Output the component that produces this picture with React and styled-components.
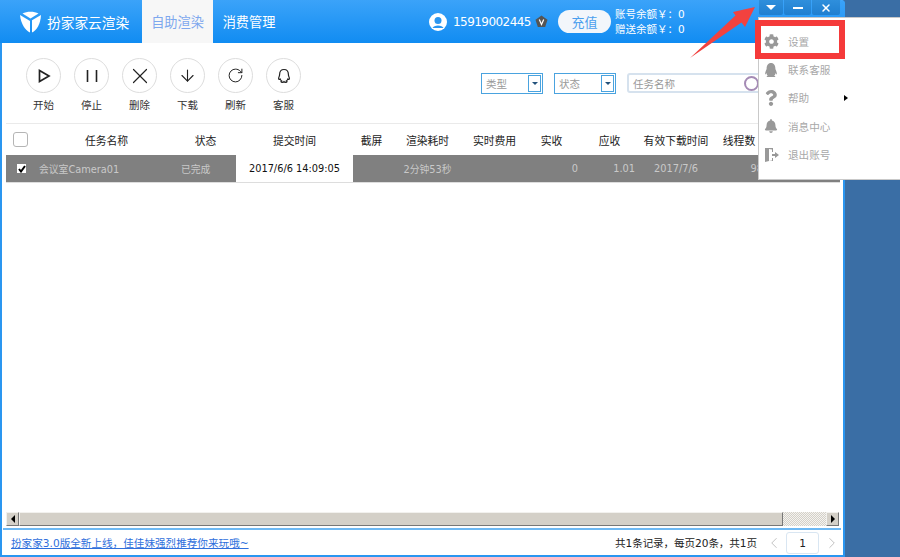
import React from 'react';
import styled, { createGlobalStyle } from 'styled-components';
import { ArrowDown, ChevronLeft, ChevronRight, RotateCw, X } from 'lucide-react';
import { FaBell, FaCog, FaQq, FaQuestion } from 'react-icons/fa';

const CJK = '"DejaVu Sans", "Noto Sans CJK SC", sans-serif';
const COLUMNS = '32px 137px 61px 117px 37px 75px 59px 55px 61px 72px 54px 1fr';

const GlobalStyle = createGlobalStyle`
  html, body { margin: 0; padding: 0; overflow: hidden; }
  body { font-family: ${CJK}; }
`;

const Desktop = styled.div`
  position: relative;
  width: 900px;
  height: 557px;
  overflow: hidden;
  background: #3a6ea5;
`;
const Win = styled.div`
  width: 845px;
  height: 557px;
  box-sizing: border-box;
  display: flex;
  flex-direction: column;
  background: #fff;
  border-left: 2px solid #2a96f0;
  border-right: 2px solid #2a96f0;
  border-bottom: 2px solid #2a96f0;
  border-top-right-radius: 4px;
`;

/* top bar */
const Header = styled.header`
  height: 43px;
  margin-left: -2px;
  margin-right: -2px;
  flex: none;
  display: flex;
  color: #fff;
  background: linear-gradient(#3ba3f9, #118cf2);
  border-top-right-radius: 4px;
`;
const Brand = styled.div`
  width: 142px;
  flex: none;
  padding-left: 19px;
  box-sizing: border-box;
  display: flex;
  align-items: center;
  gap: 5px;
  font-size: 13.7px;
  white-space: nowrap;
`;
const Tab = styled.div`
  width: ${p => p.$w}px;
  flex: none;
  display: flex;
  align-items: center;
  justify-content: center;
  font-size: 13.2px;
  color: ${p => (p.$active ? '#7ea8ee' : '#fff')};
  background: ${p => (p.$active ? '#f7f7f7' : 'transparent')};
`;
const Account = styled.div`
  margin-left: 144px;
  flex: none;
  display: flex;
  align-items: center;
`;
const Phone = styled.span`
  margin-left: 6px;
  font-size: 12px;
  letter-spacing: -0.55px;
  width: 82px;
`;
const Recharge = styled.div`
  width: 53px;
  height: 23px;
  margin-left: 10px;
  border-radius: 12px;
  background: #f2f6fb;
  color: #4b9fee;
  font-size: 13px;
  display: flex;
  align-items: center;
  justify-content: center;
`;
const Balance = styled.div`
  margin-left: 4px;
  font-size: 10.5px;
  line-height: 15px;
  white-space: nowrap;
`;
const WinButtons = styled.div`
  flex: none;
  height: 15px;
  display: flex;
  gap: 1px;
  margin-left: auto;
  margin-right: 5px;
`;
const WinButton = styled.div`
  width: ${p => p.$w}px;
  height: 15px;
  display: flex;
  align-items: center;
  justify-content: center;
  background: linear-gradient(#2f8fdc, #1f7fd0);
  border-radius: 0 0 2px 2px;
`;
const Caret = styled.i`
  border-left: 5px solid transparent;
  border-right: 5px solid transparent;
  border-top: 5px solid #fff;
`;
const Dash = styled.i`
  width: 10px;
  height: 2px;
  background: #fff;
`;

/* toolbar */
const Toolbar = styled.div`
  height: 81px;
  flex: none;
  display: flex;
  padding: 15px 0 0 20px;
  box-sizing: border-box;
  border-bottom: 1px solid #eaeaea;
  margin: 0 3px 0 4px;
`;
const Tool = styled.div`
  width: 48px;
  flex: none;
  display: flex;
  flex-direction: column;
  align-items: flex-start;
  font-size: 10.5px;
  color: #333;
`;
const Circle = styled.div`
  width: 33px;
  height: 33px;
  border: 1px solid #ddd;
  border-radius: 50%;
  display: flex;
  align-items: center;
  justify-content: center;
  color: #222;
`;
const ToolLabel = styled.span`
  width: 35px;
  margin-top: 4px;
  text-align: center;
`;
const Filters = styled.div`
  margin-left: auto;
  margin-right: 78px;
  margin-top: 15px;
  display: flex;
  gap: 11px;
`;
const Select = styled.div`
  width: 62px;
  height: 21px;
  box-sizing: border-box;
  border: 1px solid #4aa3df;
  display: flex;
  align-items: center;
  padding-left: 4px;
  font-size: 10.5px;
  color: #999;
`;
const SelectArrow = styled.span`
  margin-left: auto;
  margin-right: 1px;
  width: 13px;
  height: 17px;
  box-sizing: border-box;
  border: 1px solid #4aa3df;
  display: flex;
  align-items: center;
  justify-content: center;
  &::after {
    content: '';
    border-left: 3px solid transparent;
    border-right: 3px solid transparent;
    border-top: 3px solid #23527c;
  }
`;
const Search = styled.div`
  width: 135px;
  height: 20px;
  box-sizing: border-box;
  border: 2px solid #d6e2ee;
  border-radius: 3px;
  display: flex;
  align-items: center;
  padding-left: 4px;
  font-size: 10.5px;
  color: #999;
`;
const Lens = styled.i`
  margin-left: auto;
  margin-right: 1px;
  width: 11px;
  height: 11px;
  border: 2px solid #a58bb5;
  border-radius: 50%;
`;

/* table */
const HeadRow = styled.div`
  height: 31px;
  flex: none;
  margin-left: 4px;
  margin-right: 3px;
  display: grid;
  grid-template-columns: ${COLUMNS};
  align-items: center;
  font-size: 10.8px;
  color: #222;
  text-align: center;
`;
const HeadBox = styled.span`
  width: 13px;
  height: 13px;
  margin-left: 7px;
  border: 1px solid #b5b5b5;
  border-radius: 3px;
`;
const DataRow = styled.div`
  height: 27px;
  flex: none;
  margin-left: 4px;
  margin-right: 3px;
  display: grid;
  grid-template-columns: ${COLUMNS};
  background: #808080;
  border-bottom: 1px solid #ddd;
  font-size: 9.8px;
  color: #c9c9c9;
`;
const Cell = styled.div`
  display: flex;
  align-items: center;
  white-space: nowrap;
  justify-content: ${p => p.$align || 'center'};
  padding-right: ${p => p.$pr || 0}px;
  padding-left: ${p => p.$pl || 0}px;
  background: ${p => (p.$white ? '#fff' : 'transparent')};
  color: ${p => (p.$white ? '#111' : 'inherit')};
`;
const RowCheck = styled.span`
  width: 9px;
  height: 9px;
  margin-left: 11px;
  background: #fff;
  color: #000;
  display: flex;
  align-items: center;
  justify-content: center;
`;
const Spacer = styled.div`
  flex: 1;
`;

/* scrollbar */
const HScroll = styled.div`
  height: 14px;
  flex: none;
  margin: 0 4px;
  display: flex;
  background: repeating-conic-gradient(#d4d0c8 0 25%, #f4f3f0 0 50%) 0 0 / 2px 2px;
`;
const ScrollBtn = styled.div`
  width: 13px;
  display: flex;
  align-items: center;
  justify-content: center;
  background: #d4d0c8;
  box-sizing: border-box;
  border: 1px solid;
  border-color: #f2f1ee #777 #777 #f2f1ee;
  &::after {
    content: '';
    border-top: 4px solid transparent;
    border-bottom: 4px solid transparent;
    ${p => (p.$right ? 'border-left: 4px solid #000;' : 'border-right: 4px solid #000;')}
  }
`;
const Thumb = styled.div`
  width: 764px;
  background: #d4d0c8;
  box-sizing: border-box;
  border: 1px solid;
  border-color: #f2f1ee #777 #777 #f2f1ee;
`;
const Track = styled.div`
  flex: 1;
`;

/* footer */
const Footer = styled.footer`
  height: 27px;
  flex: none;
  box-sizing: border-box;
  margin: 2px 2px 0 1px;
  border-top: 2px solid #6db8f3;
  display: flex;
  align-items: center;
  padding-left: 8px;
  font-size: 10.6px;
`;
const Notice = styled.a`
  color: #2f6fdc;
  text-decoration: underline;
`;
const Pager = styled.div`
  margin-left: auto;
  display: flex;
  align-items: center;
  color: #222;
`;
const PageInput = styled.div`
  width: 31px;
  height: 20px;
  margin: 0 4px 0 3px;
  border: 1px solid #d9e6f2;
  border-radius: 3px;
  display: flex;
  align-items: center;
  justify-content: center;
`;
const PageArrow = styled.span`
  display: flex;
  color: #bbb;
`;
const PageCount = styled.span`
  margin-right: 8px;
  letter-spacing: -0.1px;
`;

/* dropdown menu on top */
const Menu = styled.ul`
  position: absolute;
  left: 758px;
  top: 17px;
  width: 142px;
  height: 163px;
  margin: 0;
  padding: 9px 0 0;
  box-sizing: border-box;
  list-style: none;
  background: #fff;
  border: 1px solid #c9c9c9;
  border-right: none;
`;
const MenuItem = styled.li`
  position: relative;
  height: 28.4px;
  display: flex;
  align-items: center;
  padding-left: 4px;
  font-size: 10.6px;
  color: #a8a8a8;
`;
const MenuIcon = styled.span`
  width: 16px;
  margin-right: 9px;
  display: flex;
  justify-content: center;
  color: #999;
`;
const SubArrow = styled.i`
  position: absolute;
  left: 85px;
  top: 11px;
  border-top: 3px solid transparent;
  border-bottom: 3px solid transparent;
  border-left: 4px solid #000;
`;
const RedBox = styled.div`
  position: absolute;
  left: 755px;
  top: 20px;
  width: 90px;
  height: 39px;
  box-sizing: border-box;
  border: 6px solid #f53a3a;
`;
const RedArrow = styled.svg`
  position: absolute;
  left: 685px;
  top: 0;
`;

const tools = [
  ['开始', (
    <svg key="p" width="18" height="18" viewBox="0 0 18 18" fill="none" stroke="#222" strokeWidth="1.7">
      <path d="M4.500 3.500v11L14 9z" />
    </svg>
  )],
  ['停止', (
    <svg key="s" width="18" height="18" viewBox="0 0 18 18" stroke="#222" strokeWidth="1.6">
      <path d="M4.500 3v12M13.500 3v12" />
    </svg>
  )],
  ['删除', <X key="x" size={26} strokeWidth={1.1} />],
  ['下载', <ArrowDown key="d" size={19} strokeWidth={1.4} />],
  ['刷新', <RotateCw key="r" size={17} strokeWidth={1.4} />],
  ['客服', (
    <svg key="q" width="18" height="18" viewBox="0 0 18 18" fill="none" stroke="#222" strokeWidth="1.2">
      <path d="M9 2.500c-3 0-4.400 2.300-4.400 5 0 1.700-1 2.800-1 4 0 1 .7 1 1.500.4.300.9.800 1.500 1.500 2-1 .5-.8 1.400.7 1.400.9 0 1.400-.3 1.700-.7.300.4.800.7 1.700.7 1.500 0 1.700-.9.700-1.400.7-.5 1.200-1.100 1.500-2 .8.600 1.500.6 1.500-.4 0-1.200-1-2.300-1-4 0-2.700-1.400-5-4.400-5z" />
    </svg>
  )],
];

const heads = ['任务名称', '状态', '提交时间', '截屏', '渲染耗时', '实时费用', '实收', '应收', '有效下载时间', '线程数'];

const menu = [
  ['设置', <FaCog key="a" size={15} />],
  ['联系客服', <FaQq key="b" size={14} />],
  ['帮助', <FaQuestion key="c" size={16} />, true],
  ['消息中心', <FaBell key="d" size={14} />],
  ['退出账号', (
    <svg key="e" width="15" height="14" viewBox="0 0 15 14" fill="#999">
      <path d="M1 0h8v4H8V1.500L5 1v12l3-.5V10h1v3H5l-4 1z" />
      <path d="M8 6h3V4l4 3-4 3V8H8z" />
    </svg>
  )],
];

const App = () => {
  return (
    <Desktop>
      <GlobalStyle />
      <Win>
        <Header>
          <Brand>
            <svg width="23" height="23" viewBox="0 0 23 23" fill="#fff">
              <path d="M1 5l10 6v11.500C6 20 2 14 1 5z" />
              <path d="M22 5l-9 5.200v12.300C18 20 21.500 14 22 5z" />
              <path d="M3.500 3.500C8 1 15 1 19.500 3.500L11.500 8.500z" />
            </svg>
            扮家家云渲染
          </Brand>
          <Tab $active $w={71}>自助渲染</Tab>
          <Tab $w={72}>消费管理</Tab>
          <Account>
            <svg width="18" height="18" viewBox="0 0 18 18">
              <circle cx="9" cy="9" r="9" fill="#fff" />
              <circle cx="9" cy="7.500" r="3.500" fill="#2a96f0" />
              <path d="M3.500 15c1-3.500 10-3.500 11 0z" fill="#2a96f0" />
            </svg>
            <Phone>15919002445</Phone>
            <svg width="13" height="13" viewBox="0 0 13 13">
              <path d="M6.500 0.500l6 4.300-2.300 7.200H2.800L.5 4.800z" fill="#555" />
              <path d="M4.300 4.500l2.200 5 2.200-5" fill="none" stroke="#fff" strokeWidth="1.200" />
            </svg>
            <Recharge>充值</Recharge>
            <Balance>账号余额￥：0<br />赠送余额￥：0</Balance>
          </Account>
          <WinButtons>
            <WinButton $w={24}><Caret /></WinButton>
            <WinButton $w={27}><Dash /></WinButton>
            <WinButton $w={28}><X size={12} color="#fff" strokeWidth={3} /></WinButton>
          </WinButtons>
        </Header>

        <Toolbar>
          {tools.map(([label, icon]) => (
            <Tool key={label}>
              <Circle>{icon}</Circle>
              <ToolLabel>{label}</ToolLabel>
            </Tool>
          ))}
          <Filters>
            <Select>类型<SelectArrow /></Select>
            <Select>状态<SelectArrow /></Select>
            <Search>任务名称<Lens /></Search>
          </Filters>
        </Toolbar>

        <HeadRow>
          <HeadBox />
          {heads.map(h => <span key={h}>{h}</span>)}
        </HeadRow>
        <DataRow>
          <Cell $align="flex-start">
            <RowCheck>
              <svg width="8" height="8" viewBox="0 0 8 8" fill="none" stroke="#000" strokeWidth="2">
                <path d="M1 4l2 2.500L7 1" />
              </svg>
            </RowCheck>
          </Cell>
          <Cell $align="flex-start" $pl={1}>会议室Camera01</Cell>
          <Cell $align="flex-start" $pl={6}>已完成</Cell>
          <Cell $white>2017/6/6 14:09:05</Cell>
          <Cell />
          <Cell>2分钟53秒</Cell>
          <Cell />
          <Cell $align="flex-end" $pr={1}>0</Cell>
          <Cell $align="flex-end" $pr={5}>1.01</Cell>
          <Cell>2017/7/6</Cell>
          <Cell $align="flex-end" $pr={3}>98</Cell>
          <Cell />
        </DataRow>
        <Spacer />

        <HScroll>
          <ScrollBtn />
          <Thumb />
          <Track />
          <ScrollBtn $right />
        </HScroll>
        <Footer>
          <Notice>扮家家3.0版全新上线，佳佳妹强烈推荐你来玩哦~</Notice>
          <Pager>
            <PageCount>共1条记录，每页20条，共1页</PageCount>
            <PageArrow><ChevronLeft size={18} strokeWidth={1.2} /></PageArrow>
            <PageInput>1</PageInput>
            <PageArrow><ChevronRight size={18} strokeWidth={1.2} /></PageArrow>
          </Pager>
        </Footer>
      </Win>

      <Menu>
        {menu.map(([label, icon, sub]) => (
          <MenuItem key={label}>
            <MenuIcon>{icon}</MenuIcon>
            {label}
            {sub && <SubArrow />}
          </MenuItem>
        ))}
      </Menu>
      <RedBox />
      <RedArrow width="72" height="62" viewBox="0 0 72 62">
        <path d="M5 58L50.500 15.500 48 12l22-5-10 20-3.500-4.500z" fill="#f2423f" />
      </RedArrow>
    </Desktop>
  );
};

export default App;
